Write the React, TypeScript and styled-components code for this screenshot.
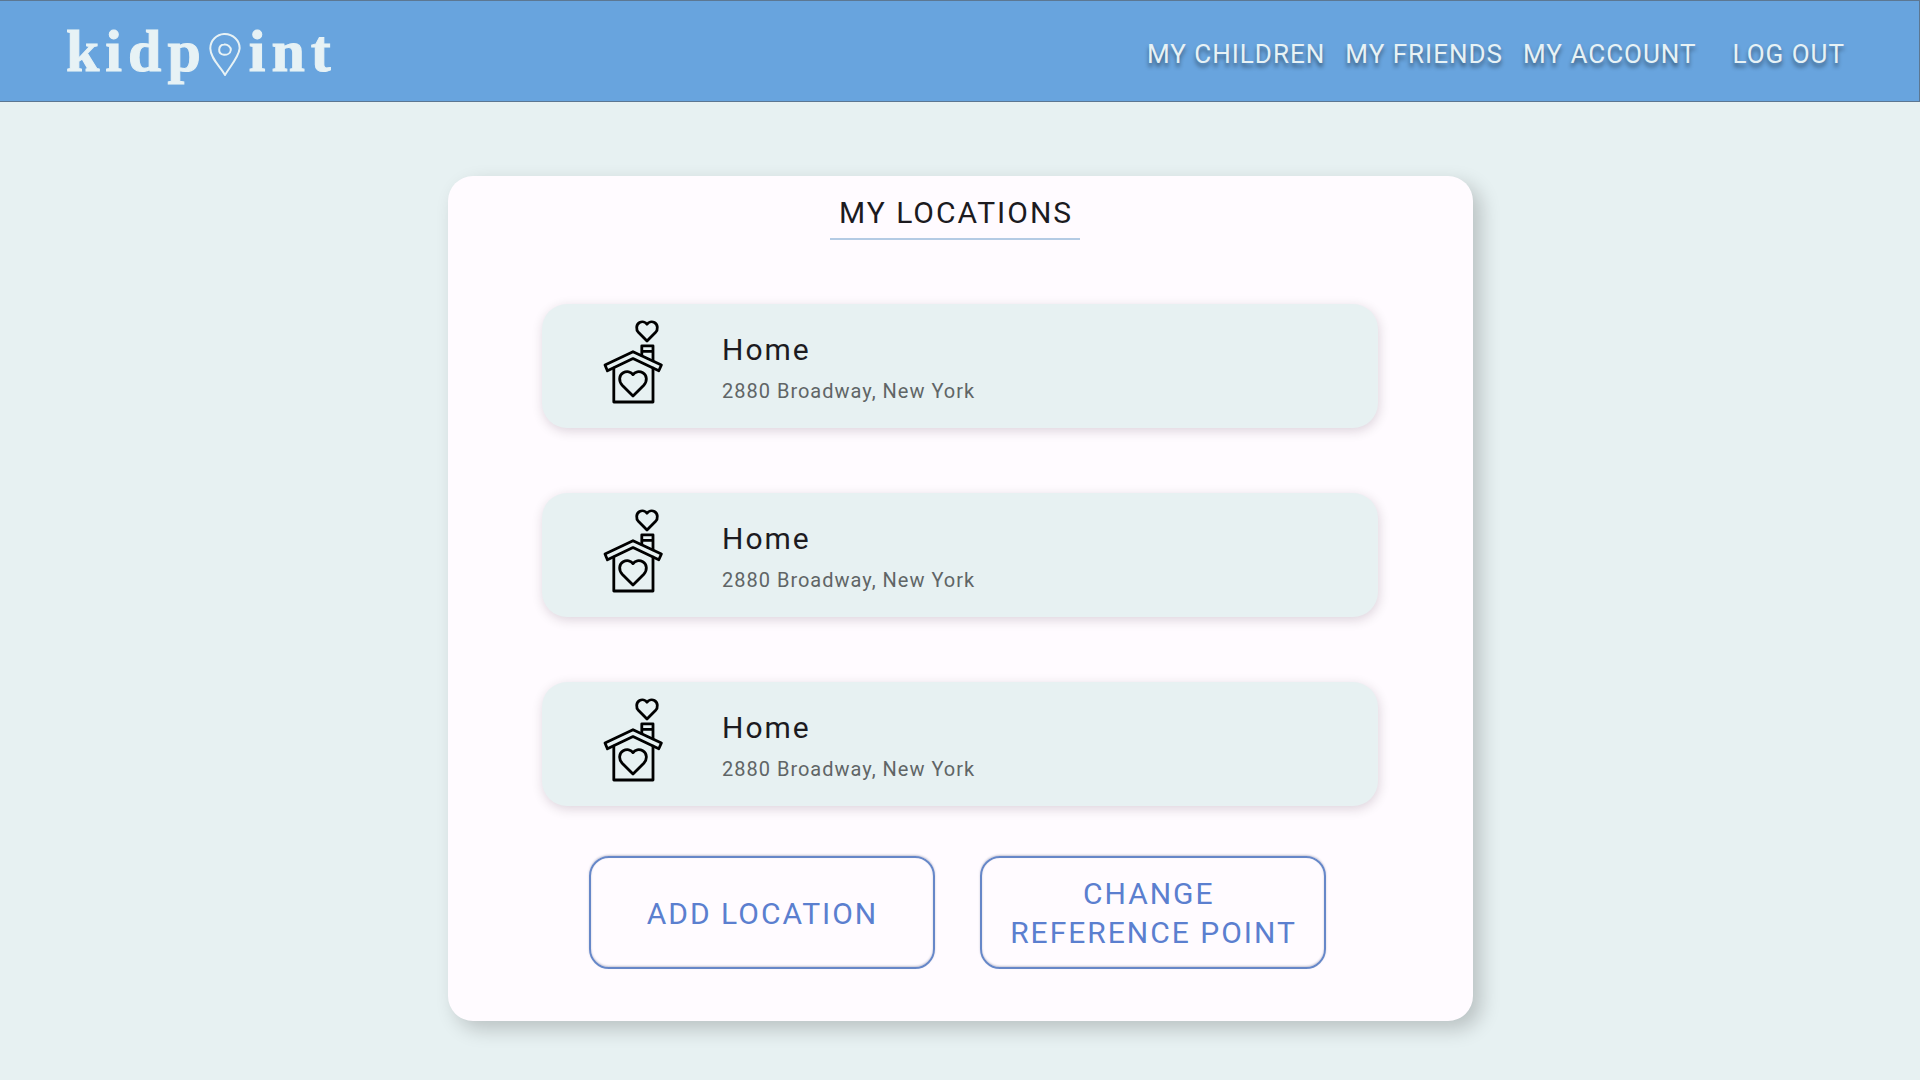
import React from 'react';
import styled, { createGlobalStyle } from 'styled-components';

const GlobalStyle = createGlobalStyle`
  * { box-sizing: border-box; }
  body {
    margin: 0;
    background: #e7f1f2;
    color: #1c1b1f;
    font-family: Roboto, "Liberation Sans", sans-serif;
  }
`;

const Header = styled.header`
  display: flex;
  align-items: center;
  justify-content: space-between;
  height: 102px;
  padding: 0 74px 0 66px;
  background: #68a4de;
  border: 1px solid #5c7792;
  border-left: 0;
`;

const Logo = styled.a`
  display: flex;
  align-items: center;
  color: #e7f2f5;
  font-family: "Liberation Serif", serif;
  font-size: 60px;
  font-weight: 700;
  line-height: 64px;
  letter-spacing: 6px;
  text-decoration: none;
  -webkit-text-stroke: 1px currentColor;
`;

const Pin = styled.svg`
  width: 32px;
  height: 44px;
  margin: 8px 8px 0 2px;
`;

const Nav = styled.nav`
  display: flex;
  align-items: center;
  gap: 20px;
  padding-top: 6px;
`;

const NavLink = styled.a<{ $apart?: boolean }>`
  margin-left: ${(p) => (p.$apart ? '16px' : '0')};
  color: #e7f2f5;
  font-size: 26px;
  line-height: 32px;
  letter-spacing: 1px;
  text-decoration: none;
  text-shadow: 0 4px 4px rgba(0, 0, 0, 0.45);
`;

const Card = styled.main`
  display: flex;
  flex-direction: column;
  align-items: center;
  width: calc(100% - 32px);
  max-width: 1025px;
  margin: 74px auto 59px;
  padding: 17px 32px 52px;
  background: #fffbff;
  border-radius: 25px;
  box-shadow: 8px 8px 20px rgba(0, 0, 0, 0.2);
`;

const Title = styled.h1`
  margin: 0 10px 64px 0;
  padding: 0 7px 5px 9px;
  border-bottom: 2px solid #b4cbe4;
  font-size: 30px;
  font-weight: 400;
  line-height: 40px;
  letter-spacing: 2px;
`;

const List = styled.ul`
  display: flex;
  flex-direction: column;
  gap: 65px;
  width: 100%;
  max-width: 836px;
  margin: 0 0 50px;
  padding: 0;
  list-style: none;
`;

const Item = styled.li`
  display: flex;
  gap: 42px;
  height: 124px;
  padding: 6px 48px;
  background: #e7f1f2;
  border-radius: 25px;
  box-shadow: 1px 3px 12px rgba(40, 0, 30, 0.16);
`;

const HouseIcon = styled.svg`
  flex: none;
  width: 90px;
  height: 100px;
`;

const Place = styled.div`
  padding-top: 19px;
`;

const Name = styled.h2`
  margin: 0;
  font-size: 30px;
  font-weight: 400;
  line-height: 42px;
  letter-spacing: 2px;
`;

const Address = styled.p`
  margin: 0;
  color: #606566;
  font-size: 20px;
  line-height: 40px;
  letter-spacing: 1px;
`;

const Actions = styled.div`
  display: flex;
  flex-wrap: wrap;
  justify-content: center;
  gap: 45px;
  padding-right: 6px;
`;

const ActionButton = styled.button`
  width: 346px;
  height: 113px;
  padding: 1px 18px 0 20px;
  background: transparent;
  border: 2px solid #6687c8;
  border-radius: 20px;
  box-shadow: 0 -1px 2px rgba(60, 70, 110, 0.3), inset 0 -1px 2px rgba(60, 70, 110, 0.3);
  color: #5b7fcf;
  font: inherit;
  font-size: 30px;
  line-height: 39px;
  letter-spacing: 2px;
  cursor: pointer;
`;

const House = () => (
  <HouseIcon
    viewBox="0 0 90 100"
    fill="none"
    stroke="#000"
    strokeWidth="2.8"
    strokeLinejoin="round"
    strokeLinecap="round"
    aria-hidden="true"
  >
    <path d="M57 31 L48.6 22.6 C45.6 19.4 46.2 14.4 49.6 12.5 C52.3 11.1 55.4 12 57 14.2 C58.6 12 61.7 11.1 64.4 12.5 C67.8 14.4 68.4 19.4 65.4 22.6 Z" />
    <path d="M51.8 45.6 V35.8 H63 V50.8 M51.8 41.4 H63" />
    <path d="M43 41.7 L71.4 55 L68.8 60.8 L43 48.6 L17.4 60.8 L15 55 Z" />
    <path d="M23.8 58.2 V92 H63 V58.2" />
    <path d="M43 86 L32.2 75.2 C28.4 71.2 29 65.2 33.2 62.8 C36.8 60.8 41 61.6 43 64.6 C45 61.6 49.2 60.8 52.8 62.8 C57 65.2 57.6 71.2 53.8 75.2 Z" />
  </HouseIcon>
);

const locations = [
  { id: 1, name: 'Home', address: '2880 Broadway, New York' },
  { id: 2, name: 'Home', address: '2880 Broadway, New York' },
  { id: 3, name: 'Home', address: '2880 Broadway, New York' },
];

export default function App() {
  return (
    <>
      <GlobalStyle />
      <Header>
        <Logo href="#" aria-label="kidpoint">
          <span>kidp</span>
          <Pin viewBox="0 0 32 44" fill="none" stroke="currentColor" strokeWidth="2" strokeLinejoin="round" aria-hidden="true">
            <path d="M16 42 C12 34 1.5 26 1.3 15.6 C1.2 7 8 1.4 15 1 C24 .8 31 7.4 30.6 15.6 C29.8 24 20.6 34 16 42 Z" />
            <path d="M15 11.6 C18.6 11 22 14 21.8 17 C21.4 20.4 18 22 15 21.8 C11.8 21.4 10 19.6 10.2 16.6 C10.4 13.4 12.4 11.8 15 11.6 Z" />
          </Pin>
          <span>int</span>
        </Logo>
        <Nav>
          <NavLink href="#">MY CHILDREN</NavLink>
          <NavLink href="#">MY FRIENDS</NavLink>
          <NavLink href="#">MY ACCOUNT</NavLink>
          <NavLink href="#" $apart>LOG OUT</NavLink>
        </Nav>
      </Header>
      <Card>
        <Title>MY LOCATIONS</Title>
        <List>
          {locations.map((l) => (
            <Item key={l.id}>
              <House />
              <Place>
                <Name>{l.name}</Name>
                <Address>{l.address}</Address>
              </Place>
            </Item>
          ))}
        </List>
        <Actions>
          <ActionButton type="button">ADD LOCATION</ActionButton>
          <ActionButton type="button">
            CHANGE&nbsp;
            <br />
            REFERENCE POINT
          </ActionButton>
        </Actions>
      </Card>
    </>
  );
}
